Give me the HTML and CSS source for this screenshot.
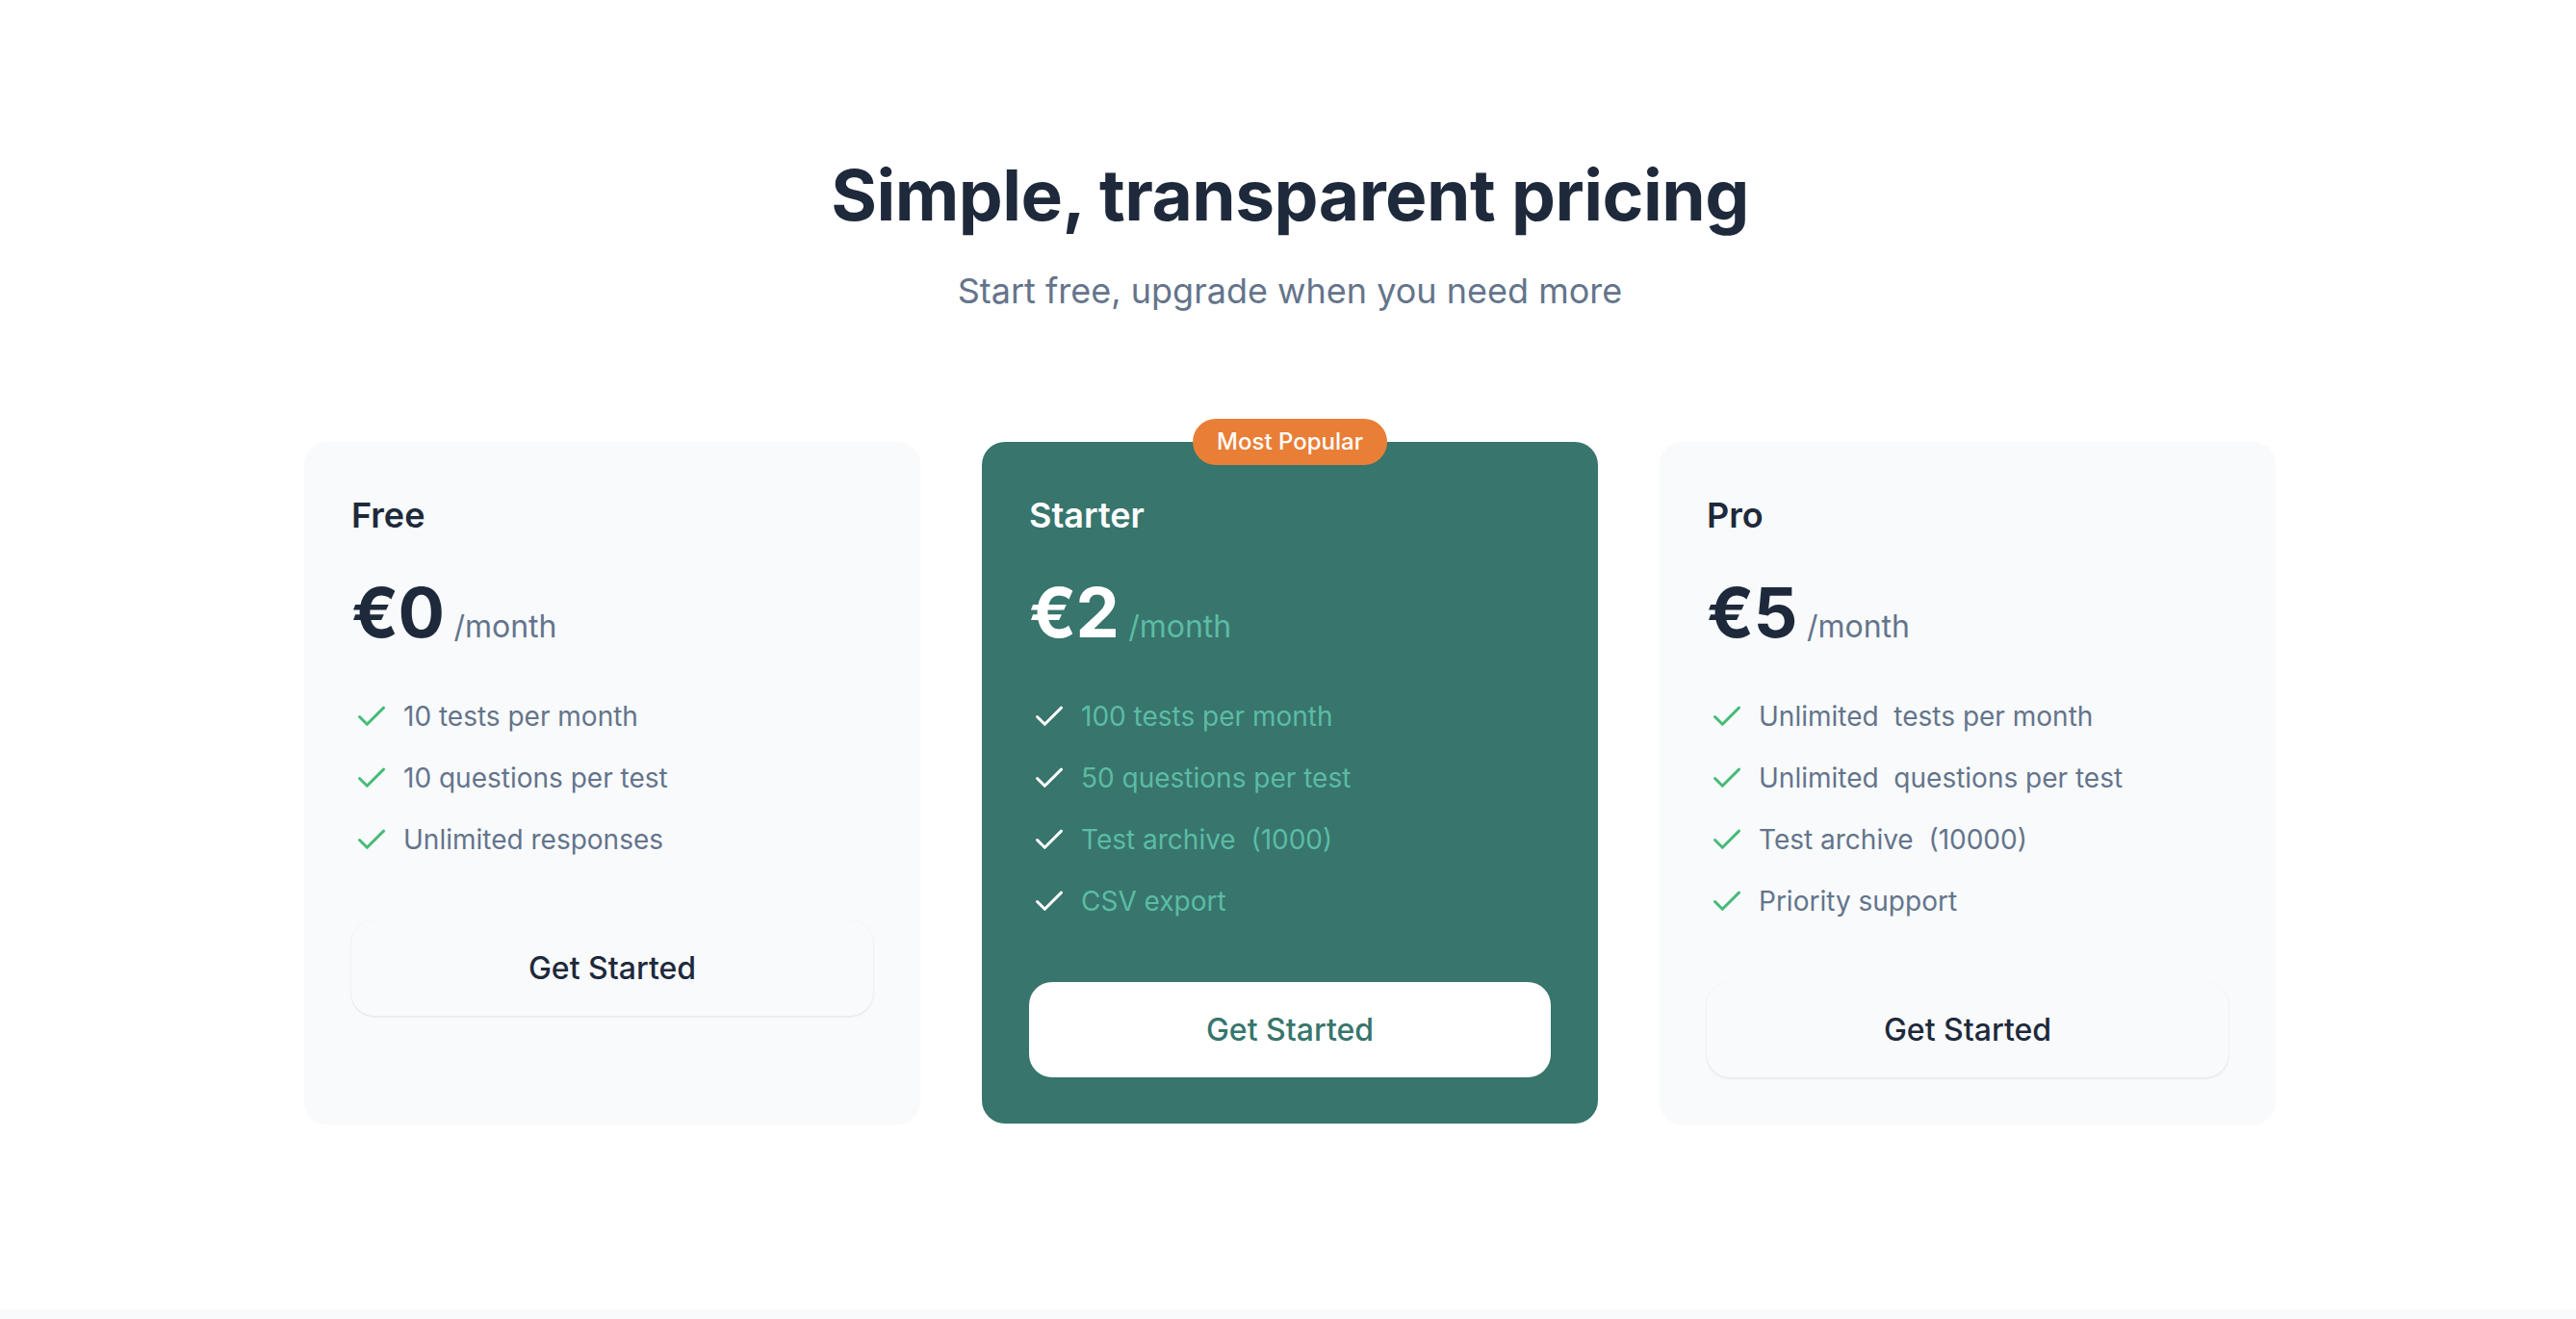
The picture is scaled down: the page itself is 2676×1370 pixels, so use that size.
FILE: index.html
```html
<!DOCTYPE html>
<html lang="en">
<head>
<meta charset="utf-8">
<title>Pricing</title>
<link rel="stylesheet" href="styles.css">
</head>
<body>
<section class="pricing">
  <h1 class="pricing-title">Simple, transparent pricing</h1>
  <p class="pricing-sub">Start free, upgrade when you need more</p>

  <div class="plans">
    <div class="plan">
      <h3 class="plan-name">Free</h3>
      <div class="plan-price"><span class="amount">€0</span><span class="period">/month</span></div>
      <ul class="features">
        <li><svg class="check" viewBox="0 0 32 32"><polyline points="3.5,16.5 11.3,24.3 28.5,7.1"/></svg><span>10 tests per month</span></li>
        <li><svg class="check" viewBox="0 0 32 32"><polyline points="3.5,16.5 11.3,24.3 28.5,7.1"/></svg><span>10 questions per test</span></li>
        <li><svg class="check" viewBox="0 0 32 32"><polyline points="3.5,16.5 11.3,24.3 28.5,7.1"/></svg><span>Unlimited responses</span></li>
      </ul>
      <button class="plan-btn">Get Started</button>
    </div>

    <div class="plan plan-featured">
      <span class="badge">Most Popular</span>
      <h3 class="plan-name">Starter</h3>
      <div class="plan-price"><span class="amount">€2</span><span class="period">/month</span></div>
      <ul class="features">
        <li><svg class="check" viewBox="0 0 32 32"><polyline points="3.5,16.5 11.3,24.3 28.5,7.1"/></svg><span>100 tests per month</span></li>
        <li><svg class="check" viewBox="0 0 32 32"><polyline points="3.5,16.5 11.3,24.3 28.5,7.1"/></svg><span>50 questions per test</span></li>
        <li><svg class="check" viewBox="0 0 32 32"><polyline points="3.5,16.5 11.3,24.3 28.5,7.1"/></svg><span>Test archive&nbsp; (1000)</span></li>
        <li><svg class="check" viewBox="0 0 32 32"><polyline points="3.5,16.5 11.3,24.3 28.5,7.1"/></svg><span>CSV export</span></li>
      </ul>
      <button class="plan-btn">Get Started</button>
    </div>

    <div class="plan">
      <h3 class="plan-name">Pro</h3>
      <div class="plan-price"><span class="amount">€5</span><span class="period">/month</span></div>
      <ul class="features">
        <li><svg class="check" viewBox="0 0 32 32"><polyline points="3.5,16.5 11.3,24.3 28.5,7.1"/></svg><span>Unlimited&nbsp; tests per month</span></li>
        <li><svg class="check" viewBox="0 0 32 32"><polyline points="3.5,16.5 11.3,24.3 28.5,7.1"/></svg><span>Unlimited&nbsp; questions per test</span></li>
        <li><svg class="check" viewBox="0 0 32 32"><polyline points="3.5,16.5 11.3,24.3 28.5,7.1"/></svg><span>Test archive&nbsp; (10000)</span></li>
        <li><svg class="check" viewBox="0 0 32 32"><polyline points="3.5,16.5 11.3,24.3 28.5,7.1"/></svg><span>Priority support</span></li>
      </ul>
      <button class="plan-btn">Get Started</button>
    </div>
  </div>
</section>
<section class="next-section"></section>
</body>
</html>
```

FILE: styles.css
```css
* { box-sizing: border-box; }

html, body {
  margin: 0;
  padding: 0;
  background: #ffffff;
  font-family: "Inter", "Noto Sans", "Liberation Sans", sans-serif;
  color: #1e293b;
}

.pricing {
  padding: 163px 0 193px 4px;
  text-align: center;
}

.pricing-title {
  margin: 0;
  font-size: 73px;
  line-height: 79px;
  font-weight: 700;
  letter-spacing: -0.007em;
  color: #1e293b;
}

.pricing-sub {
  margin: 36px 0 0;
  font-size: 36px;
  line-height: 48px;
  font-weight: 400;
  color: #64748b;
}

.plans {
  width: 2048px;
  margin: 133px auto 0;
  display: grid;
  grid-template-columns: repeat(3, 1fr);
  gap: 64px;
  text-align: left;
}

.plan {
  position: relative;
  background: #f8fafc;
  border-radius: 24px;
  padding: 48px 49px;
  display: flex;
  flex-direction: column;
  align-items: stretch;
  box-shadow: 0 1px 2px rgba(15, 23, 42, 0.03);
}

.plan-name {
  margin: 0;
  font-size: 36px;
  line-height: 56px;
  font-weight: 600;
  color: #1e293b;
}

.plan-price {
  margin-top: 37px;
  display: flex;
  align-items: baseline;
  line-height: 72px;
}

.amount {
  font-size: 72px;
  font-weight: 700;
  color: #1e293b;
  letter-spacing: -0.01em;
}

.period {
  margin-left: 10px;
  font-size: 32px;
  font-weight: 400;
  color: #64748b;
}

.features {
  list-style: none;
  margin: 37px 0 0;
  padding: 0;
  display: flex;
  flex-direction: column;
  gap: 24px;
}

.features li {
  display: flex;
  align-items: center;
  gap: 17px;
  font-size: 28px;
  line-height: 40px;
  color: #64748b;
}

.check {
  width: 32px;
  height: 32px;
  margin-left: 5px;
  flex: none;
  fill: none;
  stroke: #48bb78;
  stroke-width: 3;
  stroke-linecap: round;
  stroke-linejoin: round;
}

.plan-btn {
  margin-top: 64px;
  padding: 26px 24px;
  border: none;
  border-radius: 24px;
  background: #f8fafc;
  box-shadow: 0 1px 3px rgba(15, 23, 42, 0.08), 0 1px 2px rgba(15, 23, 42, 0.03);
  font-family: inherit;
  font-size: 32px;
  line-height: 47px;
  font-weight: 500;
  color: #1e293b;
  cursor: pointer;
}

/* Featured plan */
.plan-featured {
  background: #37756d;
  box-shadow: none;
}

.plan-featured .plan-name,
.plan-featured .amount {
  color: #ffffff;
}

.plan-featured .period,
.plan-featured .features li {
  color: #5cbca3;
}

.plan-featured .check {
  stroke: #ffffff;
}

.plan-featured .plan-btn {
  background: #ffffff;
  color: #37756d;
  box-shadow: none;
}

.badge {
  position: absolute;
  top: 0;
  left: 50%;
  transform: translate(-50%, -50%);
  height: 48px;
  padding: 0 25px;
  border-radius: 999px;
  background: #e97e37;
  color: #ffffff;
  font-size: 24px;
  line-height: 48px;
  font-weight: 500;
  white-space: nowrap;
}

.next-section {
  height: 200px;
  background: #f8fafc;
}
```
